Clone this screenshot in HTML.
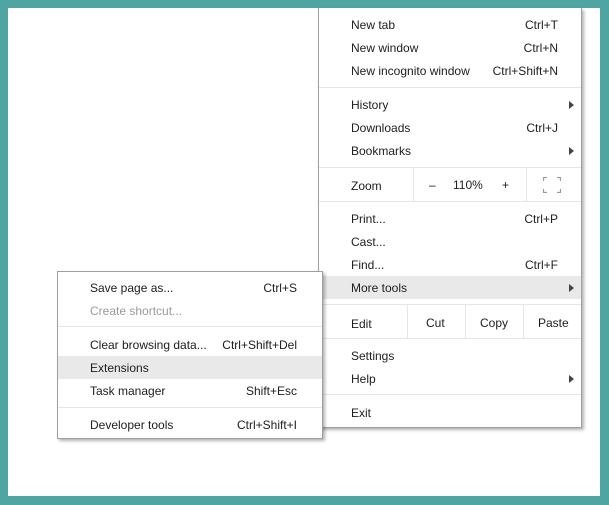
<!DOCTYPE html>
<html><head><style>
*{margin:0;padding:0;box-sizing:border-box}
body{width:609px;height:505px;background:#4fa5a1;position:relative;overflow:hidden;font-family:"Liberation Sans","DejaVu Sans",sans-serif;font-size:12px;color:#202020}
#page{position:absolute;left:8px;top:8px;width:592px;height:488px;background:#fff}
.menu{position:absolute;background:#fff;border:1px solid #a0a0a0;box-shadow:2px 2px 3px rgba(0,0,0,.3)}
.t{position:absolute;white-space:nowrap;line-height:14px}
.r{position:absolute;white-space:nowrap;line-height:14px;text-align:right}
.sep{position:absolute;height:1px;background:#e6e6e6}
.hl{position:absolute;background:#e9e9e9}
.arr{position:absolute;width:0;height:0;border-left:5px solid #444;border-top:4px solid transparent;border-bottom:4px solid transparent}
.vd{position:absolute;width:1px;background:#e6e6e6}
</style></head><body>
<div id="page"></div>
<div class="menu" style="left:318px;top:8px;width:264px;height:420px;border-top:none">
<div class="t" style="left:32px;top:10px">New tab</div><div class="r" style="right:23px;top:10px">Ctrl+T</div>
<div class="t" style="left:32px;top:33px">New window</div><div class="r" style="right:23px;top:33px">Ctrl+N</div>
<div class="t" style="left:32px;top:56px">New incognito window</div><div class="r" style="right:23px;top:56px">Ctrl+Shift+N</div>
<div class="sep" style="left:0;right:0;top:79px"></div>
<div class="t" style="left:32px;top:90px">History</div><div class="arr" style="left:250px;top:93px"></div>
<div class="t" style="left:32px;top:113px">Downloads</div><div class="r" style="right:23px;top:113px">Ctrl+J</div>
<div class="t" style="left:32px;top:136px">Bookmarks</div><div class="arr" style="left:250px;top:139px"></div>
<div class="sep" style="left:0;right:0;top:159px"></div>
<div class="t" style="left:32px;top:171px">Zoom</div>
<div class="vd" style="left:94px;top:160px;height:33px"></div>
<div class="t" style="left:110px;top:170px">–</div>
<div class="t" style="left:134px;top:170px">110%</div>
<div class="t" style="left:183px;top:170px">+</div>
<div class="vd" style="left:207px;top:160px;height:33px"></div>
<svg style="position:absolute;left:224px;top:169px" width="18" height="16"><path d="M0.5 4V0.5H4M14 0.5H17.5V4M17.5 12V15.5H14M4 15.5H0.5V12" fill="none" stroke="#9a9a9a" stroke-width="1.2"/></svg>
<div class="sep" style="left:0;right:0;top:193px"></div>
<div class="t" style="left:32px;top:204px">Print...</div><div class="r" style="right:23px;top:204px">Ctrl+P</div>
<div class="t" style="left:32px;top:227px">Cast...</div>
<div class="t" style="left:32px;top:250px">Find...</div><div class="r" style="right:23px;top:250px">Ctrl+F</div>
<div class="hl" style="left:0;right:0;top:268px;height:23px"></div>
<div class="t" style="left:32px;top:273px">More tools</div><div class="arr" style="left:250px;top:276px"></div>
<div class="sep" style="left:0;right:0;top:296px"></div>
<div class="t" style="left:32px;top:309px">Edit</div>
<div class="vd" style="left:88px;top:297px;height:33px"></div>
<div class="t" style="left:107px;top:308px">Cut</div>
<div class="vd" style="left:146px;top:297px;height:33px"></div>
<div class="t" style="left:161px;top:308px">Copy</div>
<div class="vd" style="left:204px;top:297px;height:33px"></div>
<div class="t" style="left:219px;top:308px">Paste</div>
<div class="sep" style="left:0;right:0;top:330px"></div>
<div class="t" style="left:32px;top:341px">Settings</div>
<div class="t" style="left:32px;top:364px">Help</div><div class="arr" style="left:250px;top:367px"></div>
<div class="sep" style="left:0;right:0;top:386px"></div>
<div class="t" style="left:32px;top:398px">Exit</div>
</div>
<div class="menu" style="left:57px;top:271px;width:266px;height:168px">
<div class="t" style="left:32px;top:9px">Save page as...</div><div class="r" style="right:25px;top:9px">Ctrl+S</div>
<div class="t" style="left:32px;top:32px;color:#9a9a9a">Create shortcut...</div>
<div class="sep" style="left:0;right:0;top:54px"></div>
<div class="t" style="left:32px;top:66px">Clear browsing data...</div><div class="r" style="right:25px;top:66px">Ctrl+Shift+Del</div>
<div class="hl" style="left:0;right:0;top:84px;height:23px"></div>
<div class="t" style="left:32px;top:89px">Extensions</div>
<div class="t" style="left:32px;top:112px">Task manager</div><div class="r" style="right:25px;top:112px">Shift+Esc</div>
<div class="sep" style="left:0;right:0;top:135px"></div>
<div class="t" style="left:32px;top:146px">Developer tools</div><div class="r" style="right:25px;top:146px">Ctrl+Shift+I</div>
</div>
</body></html>
